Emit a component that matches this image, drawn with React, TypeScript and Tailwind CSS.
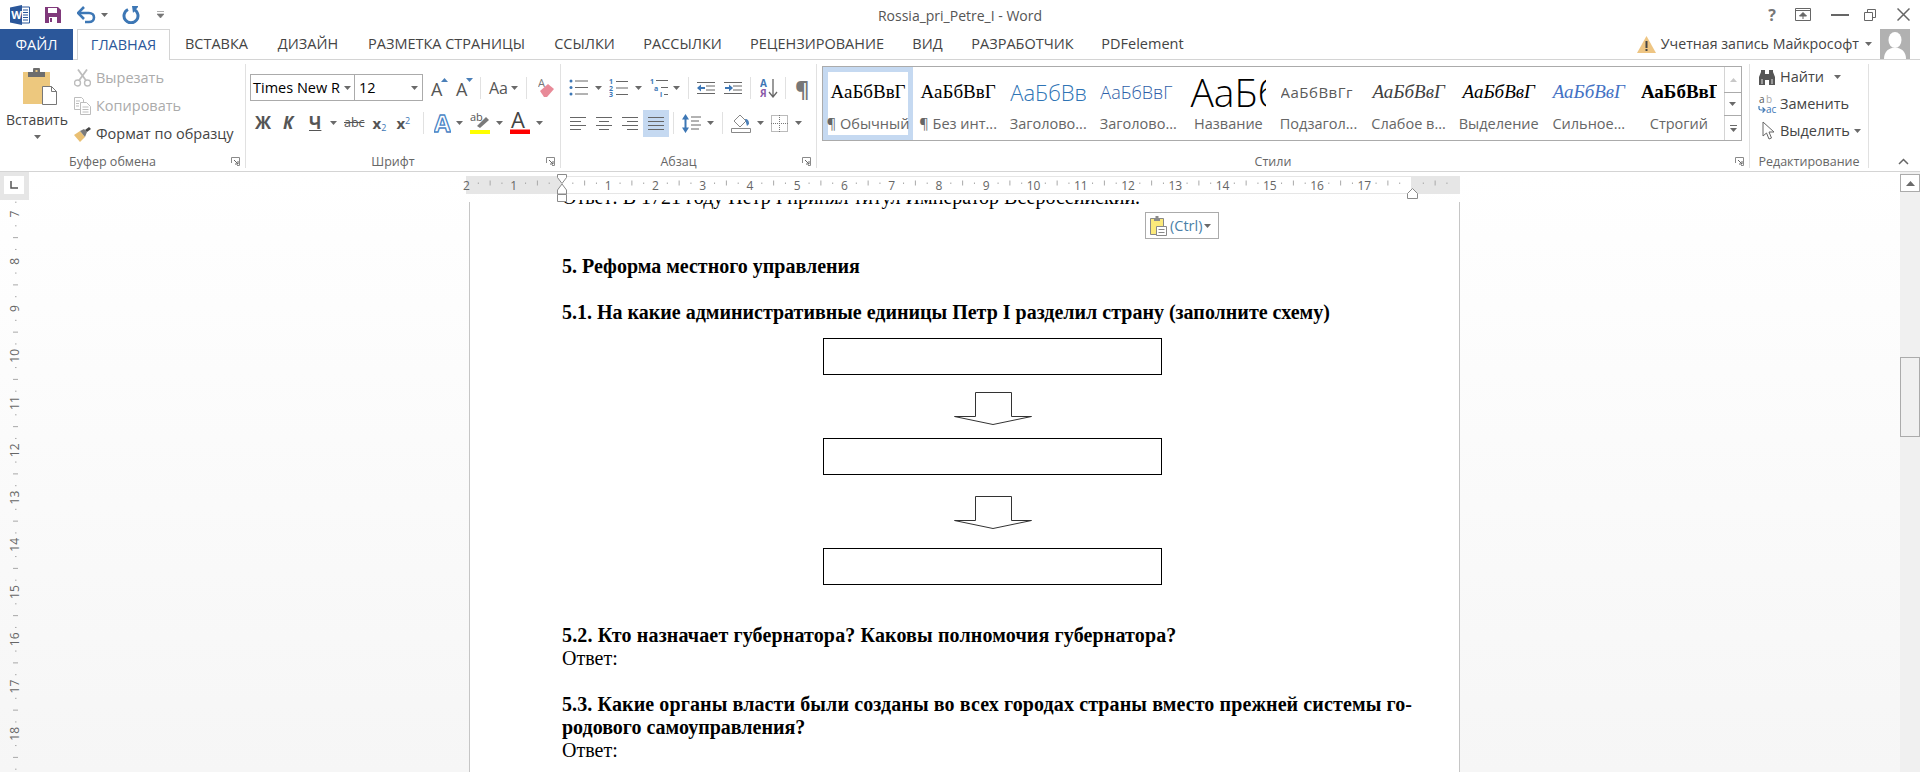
import React from 'react';

const uiFont = { fontFamily: '"Open Sans", "Noto Sans", sans-serif' };

const Caret = ({ className = '' }: { className?: string }) => (
  <svg width="7" height="4" viewBox="0 0 7 4" className={`shrink-0 ${className}`}>
    <path d="M0 0h7L3.5 4z" fill="#6a6a6a" />
  </svg>
);

const Sep = ({ className = '' }: { className?: string }) => (
  <div className={`w-px h-[22px] bg-[#e1e1e1] shrink-0 ${className}`} />
);

const Launcher = () => (
  <svg width="9" height="9" viewBox="0 0 9 9" className="absolute right-[5px] bottom-[2px]">
    <path d="M0.5 6V0.5H8.5V8.5H6" fill="none" stroke="#8a8a8a" />
    <path d="M3 3l4 4M7 4v3H4" fill="none" stroke="#666" />
  </svg>
);

// ---- Иконки заголовка ----
const WordLogo = () => (
  <svg width="20" height="20" viewBox="0 0 20 20">
    <path d="M11 2h8.5v16H11z" fill="#fff" stroke="#2b579a" />
    <path d="M13 5h5M13 7.5h5M13 10h5M13 12.5h5M13 15h5" stroke="#2b579a" />
    <path d="M0 2.5L12 0v20L0 17.5z" fill="#2b579a" />
    <text x="1.2" y="14" fontSize="11" fontWeight="700" fill="#fff" fontFamily="Open Sans">W</text>
  </svg>
);

const SaveIcon = () => (
  <svg width="16" height="16" viewBox="0 0 16 16">
    <path d="M0 0h13l3 3v13H0z" fill="#80397b" />
    <path d="M3 1h9v5H3z" fill="#fff" />
    <path d="M4 10h8v6H4z" fill="#fff" />
    <path d="M5 11h2v4H5z" fill="#80397b" />
  </svg>
);

const UndoIcon = () => (
  <svg width="20" height="18" viewBox="0 0 20 18">
    <path d="M2 7h10c3 0 5 2 5 4.5S15 16 12 16H8" fill="none" stroke="#3d77b5" strokeWidth="2.6" />
    <path d="M7 1L1 7l6 6" fill="none" stroke="#3d77b5" strokeWidth="2.6" />
  </svg>
);

const RedoIcon = () => (
  <svg width="18" height="18" viewBox="0 0 18 18">
    <path d="M6 3.5a7 7 0 1 0 6 0" fill="none" stroke="#3d77b5" strokeWidth="3" />
    <path d="M10 0h6v1l-5 6z" fill="#3d77b5" />
  </svg>
);

const CustomizeIcon = () => (
  <svg width="7" height="8" viewBox="0 0 7 8">
    <path d="M0 .5h7M0 3h7L3.5 7z" fill="#777" stroke="#777" strokeWidth=".6" />
  </svg>
);

// ---- Буфер обмена ----
const PasteIcon = () => (
  <svg width="34" height="37" viewBox="0 0 34 37">
    <path d="M0 4h27v32H0z" fill="#edc87e" />
    <path d="M5 4h17v5H5zM10 2a3.500 3.500 0 0 1 7 0v2h-7z" fill="#6d6d6d" />
    <path d="M12.500 2h2v2h-2z" fill="#edc87e" />
    <path d="M19.500 18.500h9l5 5v13h-14z" fill="#fff" stroke="#777" />
    <path d="M28.500 18.500v5h5" fill="none" stroke="#777" />
  </svg>
);

const ScissorsIcon = () => (
  <svg width="17" height="18" viewBox="0 0 17 18">
    <circle cx="3.500" cy="14" r="3" fill="none" stroke="#bdbdbd" strokeWidth="1.400" />
    <circle cx="13.500" cy="14" r="3" fill="none" stroke="#bdbdbd" strokeWidth="1.400" />
    <path d="M5 11.500L13 .5M12 11.500L4 .5" stroke="#bdbdbd" strokeWidth="1.800" />
  </svg>
);

const CopyIcon = () => (
  <svg width="17" height="18" viewBox="0 0 17 18">
    <path d="M.5.500h7l2 2v10H.5z" fill="#fff" stroke="#bdbdbd" />
    <path d="M6.500 5.500h6l4 4v8h-10z" fill="#fff" stroke="#bdbdbd" />
    <path d="M2 4h4M2 6.500h3M2 9h3M8.500 10h6M8.500 12.500h6M8.500 15h6" stroke="#bdbdbd" />
  </svg>
);

const BrushIcon = () => (
  <svg width="17" height="15" viewBox="0 0 17 15">
    <path d="M0 8l6-4 5 6-5 5z" fill="#e9bf72" />
    <path d="M6 4l4-2 3 3-2 5z" fill="#7a7a7a" />
    <path d="M11 3l4-3 2 2-4 3z" fill="#444" />
  </svg>
);

const ClipRow = ({ icon, label, muted }: { icon: React.ReactNode; label: string; muted?: boolean }) => (
  <div className="flex items-center h-[28px]">
    <div className="w-[22px] flex">{icon}</div>
    <span className={`text-[14.5px] whitespace-nowrap ${muted ? 'text-[#ababab]' : 'text-[#444]'}`}>{label}</span>
  </div>
);

// ---- Шрифт ----
const BigA = ({ up, className = '' }: { up?: boolean; className?: string }) => (
  <span className={`relative w-[16px] h-[22px] text-[18px] leading-[24px] text-[#555] shrink-0 ${className}`}>
    A
    <svg width="7" height="4" viewBox="0 0 7 4" className="absolute left-[10px] top-[1px]">
      <path d={up ? 'M0 4h7L3.500 0z' : 'M0 0h7L3.500 4z'} fill="#4a7fb8" />
    </svg>
  </span>
);

const Eraser = ({ className = '' }: { className?: string }) => (
  <svg width="16" height="19" viewBox="0 0 16 19" className={className}>
    <text x="0" y="9" fontSize="11" fill="#777" fontFamily="Open Sans">A</text>
    <path d="M2 13l8-7 6 5-7 8H6z" fill="#e88a98" />
  </svg>
);

const TextEffect = ({ className = '' }: { className?: string }) => (
  <svg width="17" height="19" viewBox="0 0 17 19" className={className}>
    <text x="0" y="18" fontSize="24" fontWeight="700" fill="#fff" stroke="#4b86c6" strokeWidth="1.300" fontFamily="Open Sans">A</text>
  </svg>
);

const Highlight = ({ className = '' }: { className?: string }) => (
  <svg width="21" height="22" viewBox="0 0 21 22" className={className}>
    <text x="0" y="9" fontSize="11" fill="#555" fontFamily="Open Sans">ab</text>
    <path d="M7 14l9-9 3 3-9 8z" fill="#7a7a7a" />
    <path d="M0 18h20v4H0z" fill="#ffff00" />
  </svg>
);

const FontColor = ({ className = '' }: { className?: string }) => (
  <svg width="20" height="22" viewBox="0 0 20 22" className={className}>
    <text x="1" y="15.500" fontSize="22" fill="#444" fontFamily="Open Sans">A</text>
    <path d="M0 17.500h20v4.500H0z" fill="#ff0000" />
  </svg>
);

// ---- Абзац ----
const Lines = ({ rows, className = '' }: { rows: [number, number][]; className?: string }) => (
  <svg width="18" height="17" viewBox="0 0 18 17" className={className}>
    {rows.map(([from, to], i) => (
      <path key={i} d={`M${from} ${2.5 + i * (12 / (rows.length - 1))}H${to}`} stroke="#666" />
    ))}
  </svg>
);

const BulletList = ({ className = '' }: { className?: string }) => (
  <svg width="19" height="17" viewBox="0 0 19 17" className={className}>
    {[2, 8.500, 15].map((y) => (
      <g key={y}>
        <circle cx="2" cy={y} r="1.500" fill="#3d77b5" />
        <path d={`M6 ${y}H19`} stroke="#666" />
      </g>
    ))}
  </svg>
);

const NumberList = ({ className = '' }: { className?: string }) => (
  <svg width="19" height="19" viewBox="0 0 19 19" className={className}>
    {['1', '2', '3'].map((n, i) => (
      <g key={n}>
        <text x="0" y={6 + i * 6.500} fontSize="7" fontWeight="700" fill="#3d77b5" fontFamily="Open Sans">{n}</text>
        <path d={`M7 ${3.500 + i * 6.500}H19`} stroke="#666" />
      </g>
    ))}
  </svg>
);

const MultiList = ({ className = '' }: { className?: string }) => (
  <svg width="19" height="19" viewBox="0 0 19 19" className={className}>
    <text x="1" y="6" fontSize="7" fontWeight="700" fill="#3d77b5" fontFamily="Open Sans">1</text>
    <text x="5" y="12.500" fontSize="7" fontWeight="700" fill="#3d77b5" fontFamily="Open Sans">a</text>
    <text x="11" y="19" fontSize="7" fontWeight="700" fill="#3d77b5" fontFamily="Open Sans">i</text>
    <path d="M7 2.500H19M12 9.500H19M15 16.500H19" stroke="#666" />
  </svg>
);

const IndentIcon = ({ inward, className = '' }: { inward?: boolean; className?: string }) => (
  <svg width="18" height="12" viewBox="0 0 18 12" className={className}>
    <path d="M0 .5h18M9 4h9M9 8h9M0 11.500h18" stroke="#666" />
    <path d="M1 6h7" stroke="#3d77b5" strokeWidth="2" />
    <path d={inward ? 'M5 2.500L9 6 5 9.500z' : 'M4 2.500L0 6l4 3.500z'} fill="#3d77b5" />
  </svg>
);

const SortIcon = ({ className = '' }: { className?: string }) => (
  <svg width="18" height="20" viewBox="0 0 18 20" className={className}>
    <text x="0" y="9" fontSize="10" fontWeight="700" fill="#3d77b5" fontFamily="Open Sans">А</text>
    <text x="0" y="19" fontSize="10" fontWeight="700" fill="#8a5aa8" fontFamily="Open Sans">Я</text>
    <path d="M13 1v17M9 14l4 5 4-5" fill="none" stroke="#666" strokeWidth="1.300" />
  </svg>
);

const LineSpacing = ({ className = '' }: { className?: string }) => (
  <svg width="19" height="19" viewBox="0 0 19 19" className={className}>
    <path d="M3.500 3v13" stroke="#3d77b5" strokeWidth="2" />
    <path d="M0 5.500L3.500 0 7 5.500zM0 13.500L3.500 19 7 13.500z" fill="#3d77b5" />
    <path d="M9 3h10M9 7h8M9 11h10M9 15h8" stroke="#666" />
  </svg>
);

const FillIcon = ({ className = '' }: { className?: string }) => (
  <svg width="20" height="19" viewBox="0 0 20 19" className={className}>
    <path d="M3 7l6-6 6 6-6 6z" fill="#fff" stroke="#888" />
    <path d="M14 5c3 0 4 2 4 5l-2 2z" fill="#4a7fb8" />
    <path d="M.5 14.500h19v4H.5z" fill="#fff" stroke="#888" />
  </svg>
);

const BordersIcon = ({ className = '' }: { className?: string }) => (
  <svg width="17" height="17" viewBox="0 0 17 17" className={className}>
    <path d="M.5.500h16v16H.5z" fill="none" stroke="#777" strokeDasharray="1 1" />
    <path d="M8.500 0v17M0 8.500h17" stroke="#777" strokeDasharray="1 1" />
  </svg>
);

// ---- Редактирование ----
const Binoculars = () => (
  <svg width="18" height="16" viewBox="0 0 18 16">
    <path d="M1 16V8l2-5V1h4v15zM17 16V8l-2-5V1h-4v15z" fill="#555" />
    <path d="M7 5h4v6H7z" fill="#555" />
    <path d="M3 10h2v5H3zM13 10h2v5h-2z" fill="#9a9a9a" />
  </svg>
);

const ReplaceIcon = () => (
  <svg width="20" height="20" viewBox="0 0 20 20">
    <text x="1" y="9" fontSize="10" fill="#555" fontFamily="Open Sans">a</text>
    <text x="8" y="9" fontSize="10" fill="#aaa" fontFamily="Open Sans">b</text>
    <text x="8" y="19" fontSize="10" fill="#3d77b5" fontFamily="Open Sans">ac</text>
    <path d="M1 12v2.500c0 1 1 1.500 2 1.500h3M4.500 13.500L7 16l-2.500 2.500" fill="none" stroke="#3d77b5" strokeWidth="1.200" />
  </svg>
);

const CursorIcon = () => (
  <svg width="13" height="19" viewBox="0 0 13 19">
    <path d="M1 1v14l3.500-3 2.500 6 2.500-1-2.500-6H12z" fill="#fff" stroke="#666" />
  </svg>
);

const EditRow = ({ icon, label, caret, gap }: { icon: React.ReactNode; label: string; caret?: boolean; gap?: string }) => (
  <div className="flex items-center h-[27px]">
    <div className="w-[22px] flex">{icon}</div>
    <span className="text-[14.5px] text-[#444] whitespace-nowrap">{label}</span>
    {caret && <Caret className={gap} />}
  </div>
);

const Group = ({ label, width, children, launcher = true }: { label: string; width: string; children: React.ReactNode; launcher?: boolean }) => (
  <div className={`relative h-[104px] mt-[4px] flex flex-col shrink-0 border-r border-[#e1e1e1] ${width}`}>
    {children}
    <div className={`mt-auto mb-[-1px] h-[14px] leading-[14px] text-center text-[12.5px] text-[#666] ${launcher ? 'pr-[20px]' : ''}`}>{label}</div>
    {launcher && <Launcher />}
  </div>
);

const StyleItem = ({ preview, label, previewClass, selected, clip }: { preview: string; label: string; previewClass: string; selected?: boolean; clip?: boolean }) => (
  <div className={`flex-1 flex flex-col items-center min-w-0 ${selected ? 'border-[5px] border-[#c5d9f1]' : 'border-[5px] border-transparent'}`}>
    <div className={`w-[76px] h-[40px] mt-[2px] overflow-hidden flex items-center ${clip ? 'justify-start' : 'justify-center'}`}>
      <span className={`whitespace-nowrap ${previewClass}`}>{preview}</span>
    </div>
    <div className="mt-[2px] text-[14.5px] text-[#666] whitespace-nowrap">{label}</div>
  </div>
);

const styleItems = [
  { preview: 'АаБбВвГ', label: '¶ Обычный', previewClass: 'text-[19px] text-black [font-family:"Liberation_Serif",serif]', selected: true },
  { preview: 'АаБбВвГ', label: '¶ Без инт...', previewClass: 'text-[19px] text-black [font-family:"Liberation_Serif",serif]' },
  { preview: 'АаБбВвГ', label: 'Заголово...', previewClass: 'text-[22px] font-light text-[#2e74b5]', clip: true },
  { preview: 'АаБбВвГ', label: 'Заголово...', previewClass: 'text-[18px] font-light text-[#2e5ea8]', clip: true },
  { preview: 'АаБбВ', label: 'Название', previewClass: 'text-[39px] font-light text-black', clip: true },
  { preview: 'АаБбВвГг', label: 'Подзагол...', previewClass: 'text-[15px] tracking-[0.5px] text-[#5a5a5a]', clip: true },
  { preview: 'АаБбВвГ', label: 'Слабое в...', previewClass: 'text-[19px] italic text-[#404040] [font-family:"Liberation_Serif",serif]' },
  { preview: 'АаБбВвГ', label: 'Выделение', previewClass: 'text-[19px] italic text-black [font-family:"Liberation_Serif",serif]' },
  { preview: 'АаБбВвГ', label: 'Сильное...', previewClass: 'text-[19px] italic text-[#4472c4] [font-family:"Liberation_Serif",serif]' },
  { preview: 'АаБбВвГ', label: 'Строгий', previewClass: 'text-[19px] font-bold text-black [font-family:"Liberation_Serif",serif]', clip: true },
];

const tabs = [
  { name: 'ВСТАВКА', w: 'w-[93px]' },
  { name: 'ДИЗАЙН', w: 'w-[90px]' },
  { name: 'РАЗМЕТКА СТРАНИЦЫ', w: 'w-[187px]' },
  { name: 'ССЫЛКИ', w: 'w-[89px]' },
  { name: 'РАССЫЛКИ', w: 'w-[107px]' },
  { name: 'РЕЦЕНЗИРОВАНИЕ', w: 'w-[162px]' },
  { name: 'ВИД', w: 'w-[59px]' },
  { name: 'РАЗРАБОТЧИК', w: 'w-[131px]' },
  { name: 'PDFelement', w: 'w-[109px]' },
];

const CM = 47.25;

const HorizontalRuler = () => {
  const zero = 95; // x нуля внутри полосы
  const ticks: React.ReactNode[] = [];
  for (let q = -8; q < 76; q++) {
    const x = zero + (q * CM) / 4;
    if (x < 2 || x > 992) continue;
    if (q % 4 === 0) continue;
    ticks.push(
      q % 2 === 0
        ? <path key={q} d={`M${x} 6.500v5`} stroke="#a8a8a8" />
        : <path key={q} d={`M${x} 8.500v1.500`} stroke="#a8a8a8" />
    );
  }
  const nums = [-2, -1, 1, 2, 3, 4, 5, 6, 7, 8, 9, 10, 11, 12, 13, 14, 15, 16, 17];
  return (
    <svg width="994" height="30" viewBox="0 0 994 30" className="block overflow-visible relative z-10 mt-[2px] ml-[437px]">
      <rect x="0" y="2" width="994" height="18" fill="#e6e6e6" />
      <rect x="95" y="3" width="850" height="16" fill="#fff" />
      {ticks}
      {nums.map((n) => (
        <text key={n} x={zero + n * CM} y="15.500" textAnchor="middle" fontSize="12" fill="#666" fontFamily="Open Sans">{Math.abs(n)}</text>
      ))}
      {/* маркеры отступов */}
      <path d="M91.500 .5h9v3l-4.500 6-4.500-6z" fill="#fff" stroke="#8a8a8a" />
      <path d="M96 10l4.500 6v4h-9v-4z" fill="#fff" stroke="#8a8a8a" />
      <path d="M91.500 20.500h9v7h-9z" fill="#fff" stroke="#8a8a8a" />
      <path d="M941.500 24.500v-5l5-5 5 5v5z" fill="#fff" stroke="#8a8a8a" />
    </svg>
  );
};

const VerticalRuler = () => {
  const y0 = 14; // цифра 7
  const ticks: React.ReactNode[] = [];
  for (let q = -1; q < 48; q++) {
    if (q % 4 === 0) continue;
    const y = y0 + (q * CM) / 4;
    ticks.push(
      q % 2 === 0
        ? <path key={q} d={`M13 ${y}h5`} stroke="#a8a8a8" />
        : <path key={q} d={`M15 ${y}h1.500`} stroke="#a8a8a8" />
    );
  }
  const nums = [7, 8, 9, 10, 11, 12, 13, 14, 15, 16, 17, 18, 19];
  return (
    <svg width="29" height="572" viewBox="0 0 29 572" className="block">
      {ticks}
      {nums.map((n, i) => {
        const y = y0 + i * CM;
        return (
          <text key={n} x="15" y={y + 4} textAnchor="middle" fontSize="12" fill="#666" fontFamily="Open Sans" transform={`rotate(-90 15 ${y})`}>{n}</text>
        );
      })}
    </svg>
  );
};

const DownArrow = () => (
  <svg width="80" height="33" viewBox="0 0 80 33" className="block mx-auto">
    <path d="M22.500 .5h36v24h20L40 32.500 1.500 24.500h21z" fill="#fff" stroke="#333" />
  </svg>
);

const Box = () => <div className="w-[339px] h-[37px] border-[1.5px] border-black bg-white" />;

export default function App() {
  return (
    <div className="w-[1920px] h-[772px] overflow-hidden flex flex-col bg-white" style={uiFont}>
      {/* Заголовок */}
      <div className="h-[29px] grid grid-cols-[1fr_auto_1fr] items-center shrink-0">
        <div className="flex items-center pl-[10px]">
          <WordLogo />
          <div className="ml-[15px]"><SaveIcon /></div>
          <div className="ml-[16px]"><UndoIcon /></div>
          <Caret className="ml-[4px]" />
          <div className="ml-[14px]"><RedoIcon /></div>
          <div className="ml-[17px]"><CustomizeIcon /></div>
        </div>
        <div className="text-[14px] text-[#555] pt-[2px]">Rossia_pri_Petre_I - Word</div>
        <div className="flex items-center justify-end pr-[10px]">
          <span className="text-[16px] font-bold text-[#777]">?</span>
          <svg width="16" height="13" viewBox="0 0 16 13" className="ml-[19px]">
            <path d="M.5.500h15v12H.5z" fill="none" stroke="#666" />
            <path d="M.5 2.500h15" stroke="#666" />
            <path d="M8 11V5M4.500 8L8 4.500 11.500 8z" fill="#666" stroke="#666" />
          </svg>
          <div className="ml-[20px] w-[18px] h-[2px] bg-[#666]" />
          <svg width="12" height="12" viewBox="0 0 12 12" className="ml-[15px]">
            <path d="M3.500 3V.5h8v8H9M.5 3.500h8v8h-8z" fill="none" stroke="#666" strokeWidth="1" />
          </svg>
          <svg width="13" height="13" viewBox="0 0 13 13" className="ml-[21px]">
            <path d="M.5.500l12 12M12.500.5l-12 12" stroke="#666" strokeWidth="1.500" />
          </svg>
        </div>
      </div>

      {/* Вкладки */}
      <div className="h-[31px] flex border-b border-[#d4d4d4] shrink-0 relative">
        <div className="w-[73px] h-[31px] bg-[#2b579a] text-white text-[14.5px] flex items-center justify-center">ФАЙЛ</div>
        <div className="ml-[4px] w-[93px] h-[31px] bg-white border border-b-0 border-[#d4d4d4] text-[#2b579a] text-[14.5px] flex items-center justify-center z-10">ГЛАВНАЯ</div>
        <div className="flex">
          {tabs.map((tab) => (
            <div key={tab.name} className={`${tab.w} flex items-center justify-center text-[14.5px] text-[#444] whitespace-nowrap`}>{tab.name}</div>
          ))}
        </div>
        <div className="ml-auto flex items-center pr-[10px]">
          <svg width="19" height="17" viewBox="0 0 19 17">
            <path d="M9.500 0L19 17H0z" fill="#eec583" />
            <path d="M8.500 5h2v7h-2zM8.500 13h2v2h-2z" fill="#444" />
          </svg>
          <span className="ml-[5px] text-[14.2px] text-[#444] whitespace-nowrap">Учетная запись Майкрософт</span>
          <Caret className="ml-[6px]" />
          <div className="ml-[8px] w-[30px] h-[30px] bg-[#b1b1b1] overflow-hidden">
            <svg width="30" height="30" viewBox="0 0 30 30">
              <ellipse cx="15" cy="11" rx="6.500" ry="8" fill="#fff" />
              <path d="M4 30c0-7 4-10 8-11h6c4 1 8 4 8 11z" fill="#fff" />
            </svg>
          </div>
        </div>
      </div>

      {/* Лента */}
      <div className="h-[112px] flex border-b border-[#d4d4d4] shrink-0">
        <Group label="Буфер обмена" width="w-[246px]">
          <div className="flex">
            <div className="w-[74px] flex flex-col items-center">
              <div className="mt-[4px] ml-[6px]"><PasteIcon /></div>
              <div className="mt-[4px] text-[14px] text-[#444]">Вставить</div>
              <Caret className="mt-[5px]" />
            </div>
            <div className="mt-[-5px] pt-[5px]">
              <ClipRow icon={<ScissorsIcon />} label="Вырезать" muted />
              <ClipRow icon={<CopyIcon />} label="Копировать" muted />
              <ClipRow icon={<BrushIcon />} label="Формат по образцу" />
            </div>
          </div>
        </Group>

        <Group label="Шрифт" width="w-[315px]">
          <div className="mt-[10px] pl-[4px] h-[27px] flex items-center">
            <div className="w-[105px] h-[27px] border border-[#ababab] flex items-center pl-[2px] text-[14.5px] text-black whitespace-nowrap">
              Times New R<Caret className="ml-[4px]" />
            </div>
            <div className="w-[69px] h-[27px] -ml-px border border-[#ababab] flex items-center justify-between px-[4px] text-[14.5px] text-black">
              12<Caret />
            </div>
            <BigA up className="ml-[8px]" />
            <BigA className="ml-[9px]" />
            <Sep className="ml-[8px]" />
            <span className="ml-[8px] text-[16px] text-[#555]">Aa</span>
            <Caret className="ml-[3px]" />
            <Sep className="ml-[8px]" />
            <Eraser className="ml-[11px]" />
          </div>
          <div className="mt-[8px] h-[28px] flex items-center pl-[9px] text-[#555]">
            <span className="w-[16px] text-[17px] font-bold">Ж</span>
            <span className="ml-[12px] w-[12px] text-[17px] font-bold italic">К</span>
            <span className="ml-[14px] w-[12px] text-[17px] font-bold underline">Ч</span>
            <Caret className="ml-[9px]" />
            <span className="ml-[7px] text-[12.5px] line-through">abc</span>
            <span className="ml-[8px] text-[15px] font-bold">x<sub className="text-[9px] font-normal text-[#3d77b5]">2</sub></span>
            <span className="ml-[10px] text-[15px] font-bold">x<sup className="text-[9px] font-normal text-[#3d77b5]">2</sup></span>
            <Sep className="ml-[13px]" />
            <TextEffect className="ml-[10px]" />
            <Caret className="ml-[5px]" />
            <Highlight className="ml-[7px]" />
            <Caret className="ml-[5px]" />
            <FontColor className="ml-[7px]" />
            <Caret className="ml-[6px]" />
          </div>
        </Group>

        <Group label="Абзац" width="w-[256px]">
          <div className="mt-[10px] h-[27px] flex items-center pl-[8px]">
            <BulletList />
            <Caret className="ml-[7px]" />
            <NumberList className="ml-[7px]" />
            <Caret className="ml-[7px]" />
            <MultiList className="ml-[7px]" />
            <Caret className="ml-[5px]" />
            <Sep className="ml-[8px]" />
            <IndentIcon className="ml-[8px]" />
            <IndentIcon inward className="ml-[9px]" />
            <Sep className="ml-[8px]" />
            <SortIcon className="ml-[9px]" />
            <Sep className="ml-[7px]" />
            <span className="ml-[9px] text-[22px] leading-[22px] font-bold text-[#777]">¶</span>
          </div>
          <div className="mt-[8px] h-[28px] flex items-center pl-[9px]">
            <Lines rows={[[0, 16], [0, 11], [0, 16], [0, 11]]} />
            <Lines rows={[[0, 16], [3, 13], [0, 16], [3, 13]]} className="ml-[8px]" />
            <Lines rows={[[0, 16], [5, 16], [0, 16], [5, 16]]} className="ml-[8px]" />
            <div className="ml-[3px] w-[26px] h-[27px] bg-[#c5d9f1] flex items-center justify-center">
              <Lines rows={[[1, 17], [1, 17], [1, 17], [1, 17]]} />
            </div>
            <Sep className="ml-[4px]" />
            <LineSpacing className="ml-[8px]" />
            <Caret className="ml-[6px]" />
            <Sep className="ml-[8px]" />
            <FillIcon className="ml-[8px]" />
            <Caret className="ml-[6px]" />
            <BordersIcon className="ml-[7px]" />
            <Caret className="ml-[7px]" />
          </div>
        </Group>

        <Group label="Стили" width="w-[933px]">
          <div className="mt-[2px] ml-[5px] w-[920px] h-[75px] border border-[#ababab] flex">
            <div className="flex-1 flex min-w-0">
              {styleItems.map((item, i) => (
                <StyleItem key={i} {...item} />
              ))}
            </div>
            <div className="w-[17px] flex flex-col border-l border-[#d4d4d4]">
              <div className="h-[25px] flex items-center justify-center">
                <svg width="7" height="4" viewBox="0 0 7 4"><path d="M0 4h7L3.500 0z" fill="#c8c8c8" /></svg>
              </div>
              <div className="h-[24px] flex items-center justify-center border-y border-[#ababab] -ml-px">
                <Caret />
              </div>
              <div className="h-[24px] flex flex-col gap-[2px] items-center justify-center">
                <div className="w-[7px] h-px bg-[#6a6a6a]" />
                <Caret />
              </div>
            </div>
          </div>
        </Group>

        <Group label="Редактирование" width="w-[119px]" launcher={false}>
          <div className="pl-[8px] mt-[-1px]">
            <EditRow icon={<Binoculars />} label="Найти" caret gap="ml-[10px]" />
            <EditRow icon={<ReplaceIcon />} label="Заменить" />
            <EditRow icon={<div className="ml-[4px]"><CursorIcon /></div>} label="Выделить" caret gap="ml-[4px]" />
          </div>
        </Group>

        <div className="flex-1 flex items-end justify-end pr-[11px] pb-[6px]">
          <svg width="11" height="7" viewBox="0 0 11 7">
            <path d="M1 6l4.500-4.500L10 6" fill="none" stroke="#666" strokeWidth="1.500" />
          </svg>
        </div>
      </div>

      {/* Рабочая область */}
      <div className="flex-1 min-h-0 flex bg-gradient-to-b from-white to-[#f6f6f6]">
        <div className="w-[29px] shrink-0 flex flex-col">
          <div className="h-[28px] bg-[#e6e6e6] pt-[4px] pl-[4px] shrink-0">
            <div className="w-[20px] h-[18px] bg-white flex items-center justify-center">
              <svg width="8" height="8" viewBox="0 0 8 8"><path d="M1 0v7h7" fill="none" stroke="#555" strokeWidth="1.500" /></svg>
            </div>
          </div>
          <VerticalRuler />
        </div>

        <div className="flex-1 min-w-0 flex flex-col relative">
          <div className="h-[28px] shrink-0"><HorizontalRuler /></div>

          {/* Страница */}
          <div className="relative ml-[440px] w-[991px] flex-1 min-h-0 overflow-hidden bg-white pl-[93px] text-[20px] leading-[23px] text-black [font-family:'Liberation_Serif',serif]">
            <div className="absolute left-0 top-[2px] bottom-0 w-px bg-[#c6c6c6]" />
            <div className="absolute right-0 top-[2px] bottom-0 w-px bg-[#c6c6c6]" />
            <div className="-mt-[14.5px] whitespace-nowrap">Ответ: В 1721 году Петр I принял титул Император Всероссийский.</div>
            <div className="h-[46px]" />
            <div className="font-bold whitespace-nowrap">5. Реформа местного управления</div>
            <div className="h-[23px]" />
            <div className="font-bold whitespace-nowrap">5.1. На какие административные единицы Петр I разделил страну (заполните схему)</div>
            <div className="w-[339px] ml-[261px] mt-[14px]">
              <Box />
              <div className="mt-[17px]"><DownArrow /></div>
              <div className="mt-[13px]"><Box /></div>
              <div className="mt-[21px]"><DownArrow /></div>
              <div className="mt-[19px]"><Box /></div>
            </div>
            <div className="mt-[39px] font-bold whitespace-nowrap tracking-[0.14px]">5.2. Кто назначает губернатора? Каковы полномочия губернатора?</div>
            <div>Ответ:</div>
            <div className="h-[23px]" />
            <div className="font-bold whitespace-nowrap tracking-[0.11px]">5.3. Какие органы власти были созданы во всех городах страны вместо прежней системы го-</div>
            <div className="font-bold whitespace-nowrap">родового самоуправления?</div>
            <div>Ответ:</div>

            {/* Параметры вставки */}
            <div className="absolute left-[676px] top-[12px] w-[74px] h-[27px] bg-white border border-[#ababab] flex items-center pl-[4px] text-[14.5px] text-[#4a7fa8] [font-family:'Open_Sans',sans-serif]">
              <svg width="17" height="21" viewBox="0 0 17 21" className="shrink-0">
                <path d="M.5 3.500h13v16H.5z" fill="#fbe97a" stroke="#888" />
                <path d="M4 3h6v3H4zM5.500 1h3v2h-3z" fill="#8a8a8a" />
                <path d="M6.500 11.500h10v9h-10z" fill="#fff" stroke="#888" />
                <path d="M8.500 14.500h6M8.500 17.500h6" stroke="#888" />
              </svg>
              <span className="ml-[3px]">(Ctrl)</span>
              <Caret className="ml-[2px]" />
            </div>
          </div>
        </div>

        <div className="w-[20px] shrink-0 bg-[#f0f0f0] flex flex-col pt-[2px]">
          <div className="h-[18px] bg-white border border-[#ababab] flex items-center justify-center">
            <svg width="9" height="5" viewBox="0 0 9 5"><path d="M0 5h9L4.500 0z" fill="#6a6a6a" /></svg>
          </div>
          <div className="mt-[165px] h-[80px] border border-[#ababab] bg-[#f0f0f0]" />
        </div>
      </div>
    </div>
  );
}
